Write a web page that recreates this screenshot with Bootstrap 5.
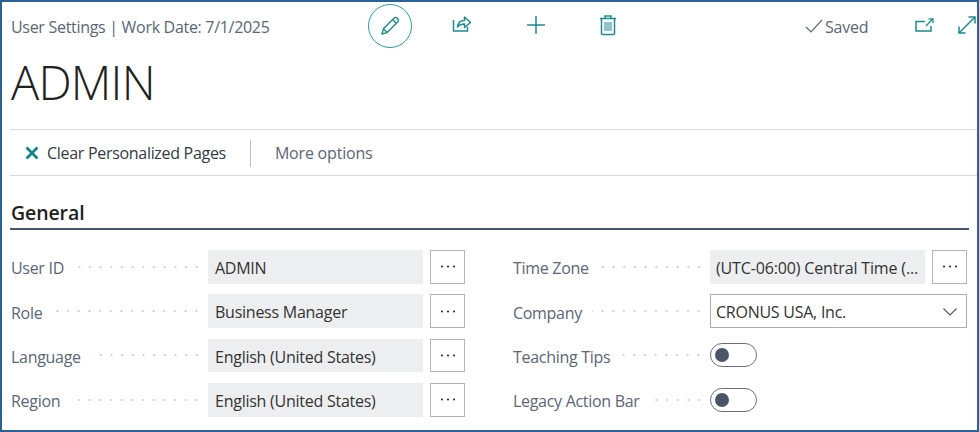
<!DOCTYPE html>
<html lang="en"><head><meta charset="utf-8"><title>User Settings</title>
<link href="https://cdn.jsdelivr.net/npm/bootstrap@5.3.0/dist/css/bootstrap.min.css" rel="stylesheet">
<style>
html,body{height:100%;margin:0;background:#fff}
body{font-family:"Open Sans","Noto Sans","Liberation Sans",sans-serif;font-size:16px;color:#212121;overflow:hidden}
.bc-frame{width:979px;height:432px;border:2px solid #2b6195;padding:0 0 0 8px;background:#fff}
.bc-top{height:52px}
.bc-crumb{font-size:16px;letter-spacing:-.3px;color:#5b6676;padding:14px 0 0 1px;line-height:22px}
.bc-circle{width:44px;height:44px;border:1.5px solid #2f9a9c;border-radius:50%}
.bc-tool{position:absolute;display:block}
.bc-saved{position:absolute;left:805px;top:16px;font-size:16px;letter-spacing:-.2px;color:#5b6676;line-height:22px}
.bc-saved svg{margin-right:2px;vertical-align:-1px}
.bc-title{font-weight:300;font-size:47px;line-height:56px;letter-spacing:-.8px;color:#212121;height:75px;margin:0;padding-left:1px}
.bc-bar{height:47px;border-top:1px solid #d9d9d9;border-bottom:1px solid #d9d9d9;padding:1px 0 0 15px}
.bc-clear{font-size:16px;letter-spacing:-.3px;color:#333a45;white-space:nowrap}
.bc-sep{width:1px;height:27px;background:#b9bec7;margin:0 25px 0 24px}
.bc-more{font-size:16px;letter-spacing:-.2px;color:#5b6676;margin-left:-1px}
.bc-head{font-weight:600;font-size:19.5px;letter-spacing:-.1px;line-height:24px;margin:25px 0 0;color:#212121;padding-left:1px;height:29px;border-bottom:2px solid #47536b;width:959px}
.bc-form{display:flex;gap:47px;margin-top:20px}
.bc-col{width:455px;display:flex;flex-direction:column;gap:10.6px}
.bc-line{display:flex;align-items:center;height:33.7px}
.bc-label{color:#5b6676;font-size:16px;letter-spacing:-.3px;padding-left:1px;white-space:nowrap;line-height:22px;padding-top:3px}
.bc-dots{flex:1;height:4px;margin:0 6px 0 10px;background:radial-gradient(circle at center,#c9c9c9 .9px,transparent 1.2px) right center/10.7px 4px repeat-x}
.bc-val{width:215px;height:100%;background:#edeef0;padding-left:7px;line-height:36px;font-size:16px;letter-spacing:-.25px;color:#333;white-space:nowrap;overflow:hidden;flex:none}
.bc-tz{letter-spacing:-.15px;padding-left:6px}
.bc-more-btn{width:35px;height:100%;margin-left:7px;flex:none;border:1px solid #b4b4b4;background:#fff;display:flex;align-items:center;justify-content:center}
.bc-select{width:257px;flex:none;height:100%;border:1px solid #a9adb3;padding:1px 9px 0 5px;font-size:16px;letter-spacing:-.25px;color:#333;display:flex;align-items:center;justify-content:space-between}
.bc-switch{width:47px;height:24px;border:1px solid #68707e;border-radius:12px;display:flex;align-items:center;padding-left:4px}
.bc-knob{width:14px;height:14px;border-radius:50%;background:#4a5568}
.bc-fixed{width:257px;flex:none}
</style></head>
<body>
<div class="bc-frame">
 <div class="bc-top">
  <div class="bc-crumb">User Settings | Work Date: 7/1/2025</div>
  <div class="bc-circle bc-tool d-flex align-items-center justify-content-center" style="left:368px;top:4px">
   <svg width="22" height="22" viewBox="0 0 22 22" fill="none" stroke="#1f8a8f" stroke-width="1.4" stroke-linejoin="round"><path d="M3 19l1.4-5.2L15.2 3a1.9 1.900 0 0 1 2.700 0l1 1a1.900 1.900 0 0 1 0 2.700L8.200 17.600z"/><path d="M4.400 13.800l3.800 3.800M13.600 4.600l3.800 3.800"/></svg>
  </div>
  <svg class="bc-tool" style="left:451px;top:12px" width="22" height="22" viewBox="0 0 22 22" fill="none" stroke="#1f8a8f" stroke-width="1.500"><path d="M2.500 8v11h14v-4"/><path d="M6.500 15c.5-4.500 3.500-6.500 7-6.500V5l6 5.500-6 5v-3.500c-3 0-5.500 1-7 3z" stroke-linejoin="round"/></svg>
  <svg class="bc-tool" style="left:525px;top:14px" width="22" height="22" viewBox="0 0 22 22" fill="none" stroke="#1f8a8f" stroke-width="1.500"><path d="M11 2v18M2 11h18"/></svg>
  <svg class="bc-tool" style="left:598px;top:14px" width="20" height="22" viewBox="0 0 20 22" fill="none" stroke="#1f8a8f" stroke-width="1.500"><path d="M3.500 5v14.500a1 1 0 0 0 1 1h11a1 1 0 0 0 1-1V5M2 4.500h16M7 4.500V2h6v2.500"/><path d="M7 8v9M9 8v9M11 8v9M13 8v9" stroke-width="1"/></svg>
  <div class="bc-saved"><svg width="18" height="15" viewBox="0 0 18 15" fill="none" stroke="#5b6676" stroke-width="1.200"><path d="M1 8l5 5L17 1"/></svg>Saved</div>
  <svg class="bc-tool" style="left:915px;top:18px" width="19" height="14" viewBox="0 0 19 14" fill="none" stroke="#1f8a8f" stroke-width="1.500"><path d="M10 3.500H1v9.500h15V8"/><path d="M11 8l6.500-7M13.500.8H18V5" stroke-width="1.300"/></svg>
  <svg class="bc-tool" style="left:957px;top:15px" width="20" height="20" viewBox="0 0 20 20" fill="none" stroke="#1f8a8f" stroke-width="1.500"><path d="M2 18L18 2M11.500 2H18v6.500M2 11.500V18h6.500"/></svg>
 </div>
 <h1 class="bc-title">ADMIN</h1>
 <div class="bc-bar d-flex align-items-center">
  <svg width="14" height="14" viewBox="0 0 14 14" class="me-2" stroke="#14848a" stroke-width="2.800" fill="none"><path d="M1.500 1.500l11 11M12.500 1.500l-11 11"/></svg>
  <span class="bc-clear">Clear Personalized Pages</span>
  <span class="bc-sep"></span>
  <span class="bc-more">More options</span>
 </div>
 <h2 class="bc-head">General</h2>
 <div class="bc-form">
  <div class="bc-col">
   <div class="bc-line"><span class="bc-label">User ID</span><span class="bc-dots"></span><div class="bc-val">ADMIN</div><div class="bc-more-btn"><svg width="16" height="3" fill="#333"><circle cx="2" cy="1.500" r="1.100"/><circle cx="8" cy="1.500" r="1.100"/><circle cx="14" cy="1.500" r="1.100"/></svg></div></div>
   <div class="bc-line"><span class="bc-label">Role</span><span class="bc-dots"></span><div class="bc-val">Business Manager</div><div class="bc-more-btn"><svg width="16" height="3" fill="#333"><circle cx="2" cy="1.500" r="1.100"/><circle cx="8" cy="1.500" r="1.100"/><circle cx="14" cy="1.500" r="1.100"/></svg></div></div>
   <div class="bc-line"><span class="bc-label">Language</span><span class="bc-dots"></span><div class="bc-val">English (United States)</div><div class="bc-more-btn"><svg width="16" height="3" fill="#333"><circle cx="2" cy="1.500" r="1.100"/><circle cx="8" cy="1.500" r="1.100"/><circle cx="14" cy="1.500" r="1.100"/></svg></div></div>
   <div class="bc-line"><span class="bc-label">Region</span><span class="bc-dots"></span><div class="bc-val">English (United States)</div><div class="bc-more-btn"><svg width="16" height="3" fill="#333"><circle cx="2" cy="1.500" r="1.100"/><circle cx="8" cy="1.500" r="1.100"/><circle cx="14" cy="1.500" r="1.100"/></svg></div></div>
  </div>
  <div class="bc-col">
   <div class="bc-line"><span class="bc-label">Time Zone</span><span class="bc-dots"></span><div class="bc-val bc-tz">(UTC-06:00) Central Time (...</div><div class="bc-more-btn"><svg width="16" height="3" fill="#333"><circle cx="2" cy="1.500" r="1.100"/><circle cx="8" cy="1.500" r="1.100"/><circle cx="14" cy="1.500" r="1.100"/></svg></div></div>
   <div class="bc-line"><span class="bc-label">Company</span><span class="bc-dots"></span><div class="bc-select">CRONUS USA, Inc.<svg width="14" height="8" viewBox="0 0 14 8" fill="none" stroke="#4a5568" stroke-width="1.100"><path d="M.5.500L7 7l6.500-6.500"/></svg></div></div>
   <div class="bc-line"><span class="bc-label">Teaching Tips</span><span class="bc-dots"></span><div class="bc-fixed"><div class="bc-switch"><span class="bc-knob"></span></div></div></div>
   <div class="bc-line"><span class="bc-label">Legacy Action Bar</span><span class="bc-dots"></span><div class="bc-fixed"><div class="bc-switch"><span class="bc-knob"></span></div></div></div>
  </div>
 </div>
</div>
<script src="https://cdn.jsdelivr.net/npm/bootstrap@5.3.0/dist/js/bootstrap.bundle.min.js"></script>
</body></html>
